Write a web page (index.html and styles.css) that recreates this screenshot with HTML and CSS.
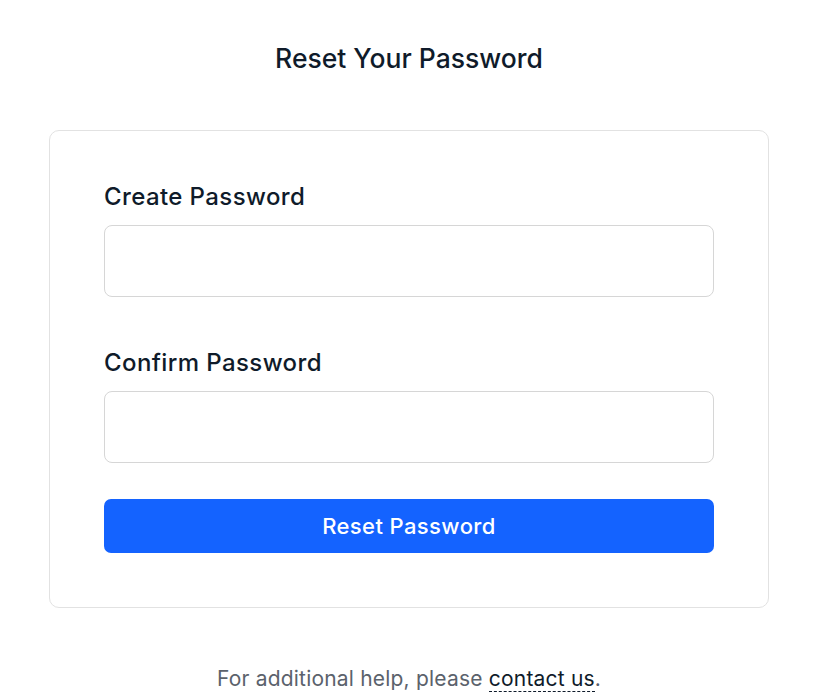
FILE: index.html
```html
<!DOCTYPE html>
<html lang="en">
<head>
<meta charset="utf-8">
<title>Reset Your Password</title>
<link rel="stylesheet" href="styles.css">
</head>
<body>
<main class="page">
  <h1 class="title">Reset Your Password</h1>
  <form class="card">
    <label class="field">
      <span class="label">Create Password</span>
      <input class="input" type="password">
    </label>
    <label class="field">
      <span class="label">Confirm Password</span>
      <input class="input" type="password">
    </label>
    <button class="btn" type="button">Reset Password</button>
  </form>
  <p class="help">For additional help, please <a class="link" href="#">contact us</a>.</p>
</main>
</body>
</html>
```
FILE: styles.css
```css
* { box-sizing: border-box; }
html, body { margin: 0; padding: 0; background: #fff; }
body {
  font-family: Inter, "Noto Sans", "Liberation Sans", sans-serif;
  color: #0f1b2a;
}
.page {
  display: flex;
  flex-direction: column;
  align-items: center;
  padding-top: 40px;
  padding-left: 2px;
}
.title {
  margin: 0;
  font-size: 26.5px;
  font-weight: 500;
  line-height: 36px;
  color: #0f1b2a;
}
.card {
  margin-top: 54px;
  width: 720px;
  border: 1px solid #e2e2e2;
  border-radius: 10px;
  padding: 50px 54px 54px;
  display: flex;
  flex-direction: column;
}
.field {
  display: flex;
  flex-direction: column;
}
.field + .field {
  margin-top: 50px;
}
.label {
  font-size: 24px;
  font-weight: 500;
  line-height: 32px;
  letter-spacing: 0.4px;
  margin-bottom: 12px;
  color: #0f1b2a;
}
.input {
  height: 72px;
  border: 1px solid #d6d6d6;
  border-radius: 8px;
  font-size: 20px;
  padding: 0 16px;
  outline: none;
}
.btn {
  margin-top: 36px;
  height: 54px;
  border: none;
  border-radius: 7px;
  background: #1463ff;
  color: #fff;
  font-family: inherit;
  font-size: 22px;
  font-weight: 500;
  letter-spacing: 0.4px;
}
.help {
  margin: 57px 0 0;
  font-size: 21px;
  line-height: 28px;
  letter-spacing: 0.2px;
  color: #5b626c;
}
.link {
  color: #0f1b2a;
  text-decoration: none;
  border-bottom: 1px dashed #0f1b2a;
}
```
